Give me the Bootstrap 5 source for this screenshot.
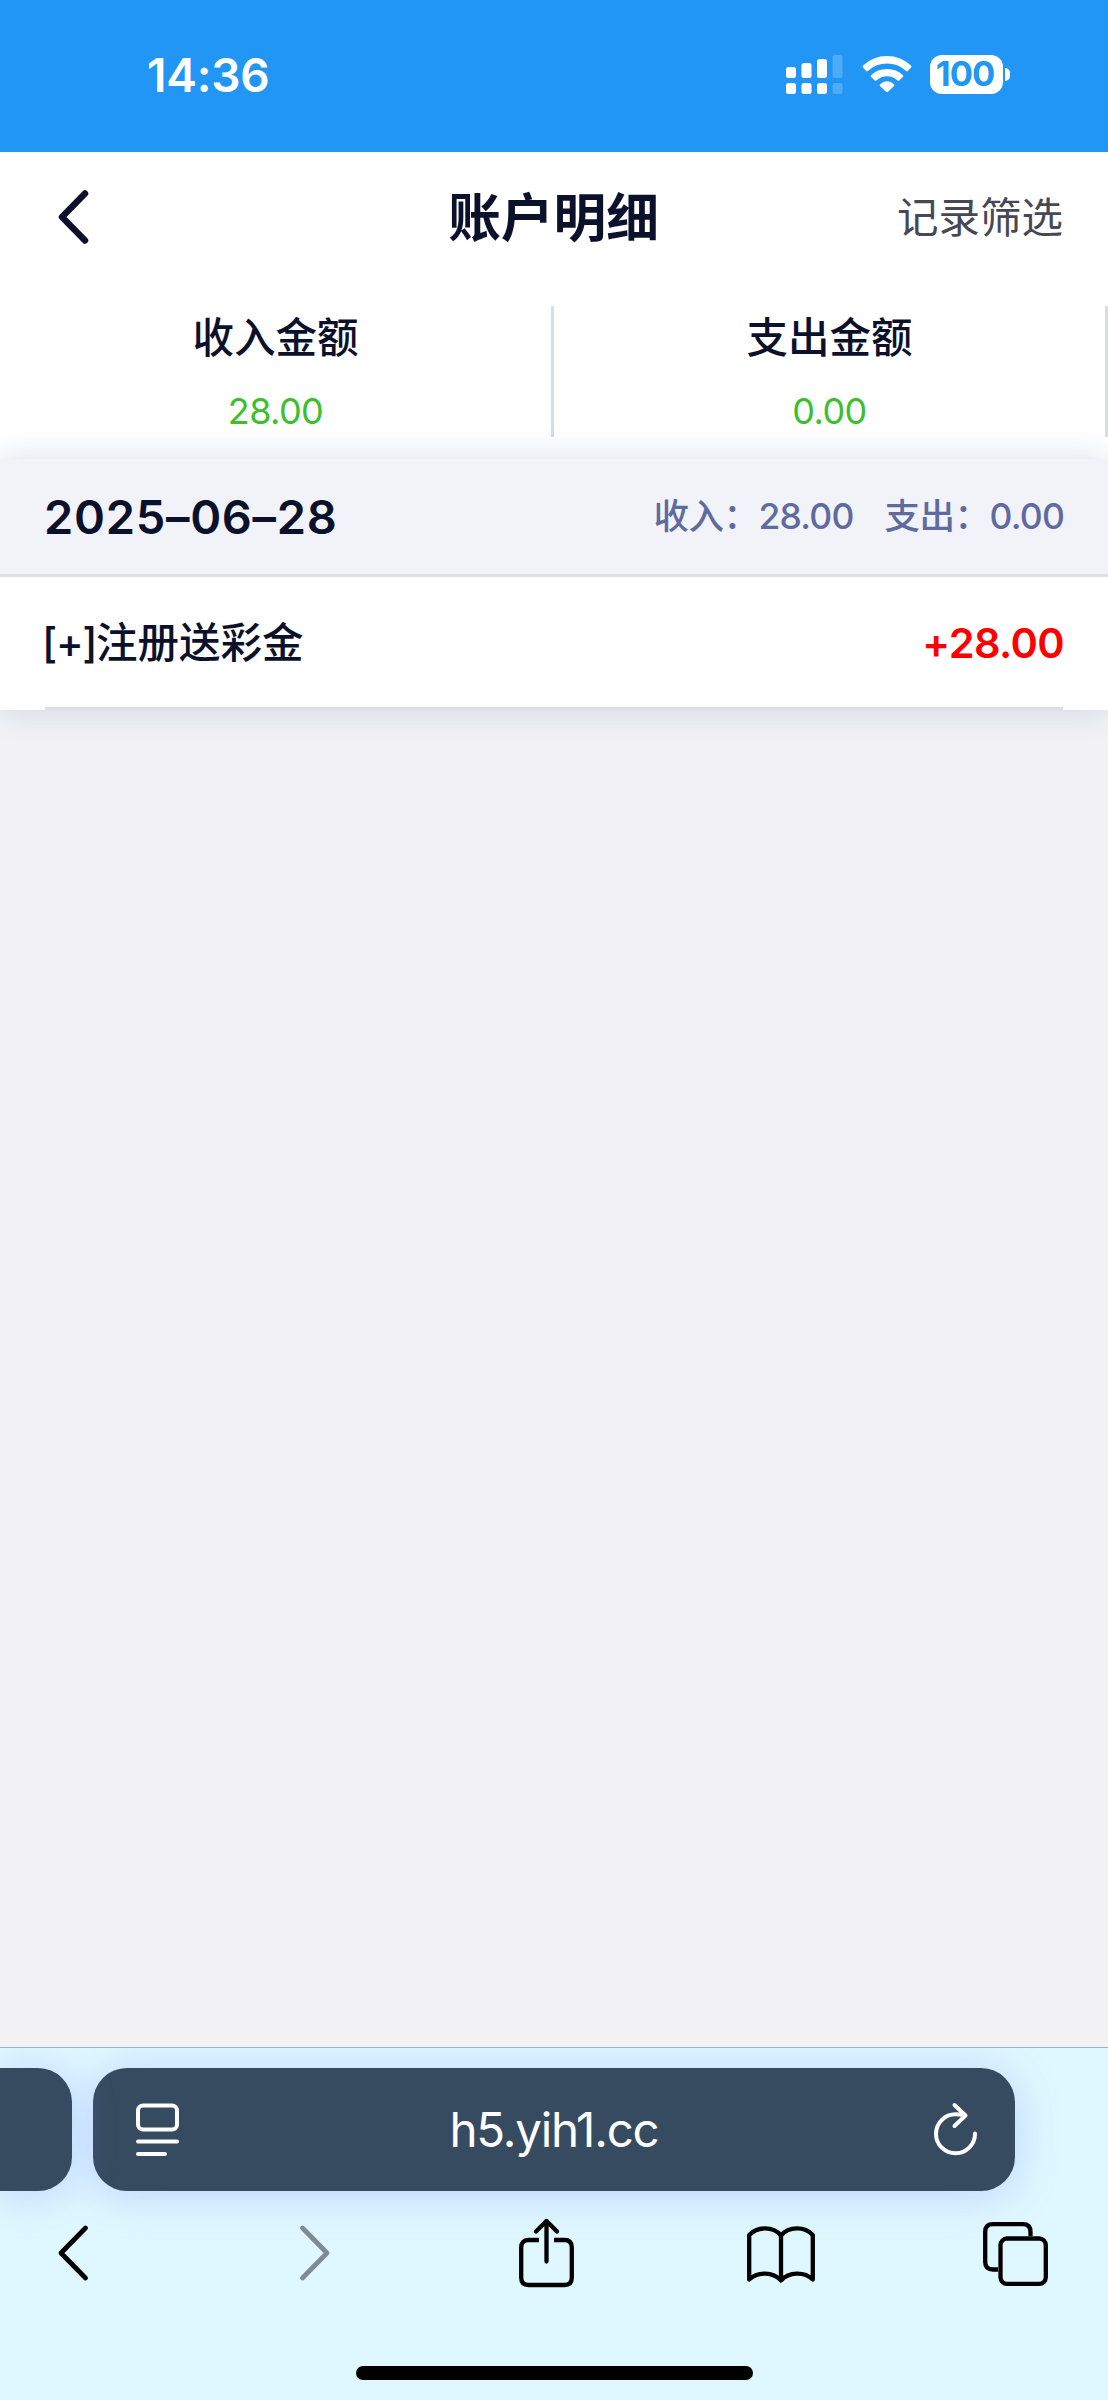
<!DOCTYPE html>
<html lang="zh-CN">
<head>
<meta charset="utf-8">
<meta name="viewport" content="width=device-width, initial-scale=1">
<title>账户明细</title>
<link href="https://cdn.jsdelivr.net/npm/bootstrap@5.3.0/dist/css/bootstrap.min.css" rel="stylesheet">
<style>
body{font-family:Inter,"Noto Sans CJK SC",sans-serif;color:#0c112b;background:#f2f2f5;line-height:1.2}
svg{display:block;flex:none;overflow:visible}
.screen{width:1108px;height:2400px}
.status-bar{height:152px;padding:0 98px 3px 147px;background:#2196f5}
.clock{font-size:46px;font-weight:600;letter-spacing:-.2px;padding-top:2px}
.cell-batt{width:80px;height:39px}
.batt-body{width:73px;height:39px;border-radius:12px;color:#2196f5;font-size:34.5px;font-weight:700;letter-spacing:-1px;padding-right:3px;line-height:38px}
.batt-tip{width:5px;height:13px;border-radius:0 6px 6px 0}
.title-bar{height:130px;padding:0 45px 0 58px}
.page-title{font-size:52.7px;font-weight:600;line-height:60px;padding-top:1px}
.filter-link{font-size:41.5px;color:#464855;text-decoration:none;line-height:60px;position:relative;top:1px}
.side-start{width:286px}
.side-end{width:300px}
.totals{height:177px;padding-top:24px}
.total-cell{height:131px;border-right:3px solid #d6dcea}
.total-label{font-size:41.5px;font-weight:500;line-height:64px}
.total-value{font-size:36px;color:#3cbf2c;line-height:44px;margin-top:19px;letter-spacing:-.6px}
.day-card{box-shadow:0 0 30px rgba(70,85,150,.2);position:relative}
.day-head{height:118px;padding:2px 44px 0 44px;background:#f2f3f9;border-bottom:3px solid #e0e0e3}
.day-date{font-size:47px;font-weight:600;letter-spacing:.7px}
.day-sum{font-size:35.5px;font-weight:500;color:#5f6b9f;gap:31px}
.sum-label{letter-spacing:-.5px}
.sum-value{letter-spacing:-.8px}
.entry{height:133px;margin:0 45px;padding-top:3px;border-bottom:3px solid #dfdfe3;font-size:41.5px;font-weight:500}
.entry-sign{letter-spacing:-1.4px;margin-left:-3px}
.entry-amount{color:#f00;font-weight:600;letter-spacing:-.6px;margin-right:-1px}
.browser{height:353px;background:#dff7fe;border-top:1px solid #9fb3c3;overflow:hidden}
.tab-strip{padding-top:20px;gap:21px}
.tab-pill{height:123px;background:#364b5f;border-radius:34px;box-shadow:0 4px 42px rgba(140,160,255,.4)}
.tab-prev{width:72px;border-radius:0 34px 34px 0;position:relative;z-index:1}
.tab-current{width:922px;padding:0 38px 0 43px}
.address{font-size:47.5px;letter-spacing:-1.2px;margin-right:5px}
.tools{height:72px;margin-top:26px;padding-left:58px}
.tool-forward{margin-left:212px}
.tool-share{margin-left:189px}
.tool-book{margin-left:173px}
.tool-tabs{margin-left:168px}
.home-line{width:397px;height:14px;border-radius:7px;margin:77px auto 0;background:#000}
</style>
</head>
<body>
<main class="screen d-flex flex-column overflow-hidden">
  <header class="status-bar d-flex justify-content-between align-items-center text-white">
    <span class="clock">14:36</span>
    <div class="d-flex align-items-center">
      <svg width="57" height="39" viewBox="0 0 57 39" fill="#fff">
        <rect x="0" y="12" width="10" height="11" rx="2.5"/><rect x="15.5" y="8" width="10" height="15" rx="2.5"/><rect x="31" y="4" width="10" height="19" rx="2.5"/><rect x="46.500" y="0" width="10" height="23" rx="2.5" opacity=".2"/>
        <rect x="0" y="28" width="10" height="11" rx="2.5"/><rect x="15.5" y="28" width="10" height="11" rx="2.5"/><rect x="31" y="28" width="10" height="11" rx="2.5"/><rect x="46.500" y="28" width="10" height="11" rx="2.5" opacity=".2"/>
      </svg>
      <svg class="ms-3 me-3" width="55" height="39" viewBox="-3 0 55 39" fill="#fff">
        <path d="M1 10.500Q11 1 25 1T49 10.500Q50 11.500 49 12.500L46 15.700Q45 16.800 43.800 15.700Q36 8.600 25 8.600T6.200 15.700Q5 16.800 4 15.700L1 12.500Q0 11.500 1 10.500Z"/>
        <path d="M9 20.200Q15.500 14 25 14T41 20.200Q41.800 21 41 21.800L37.300 25.500Q36.500 26.200 35.600 25.500Q31 21.200 25 21.200T14.400 25.500Q13.500 26.200 12.700 25.500L9 21.800Q8.200 21 9 20.200Z"/>
        <path d="M18 29.300Q21 26.300 25 26.300T32 29.300Q32.800 30 32 30.900L26 36.800Q25 37.700 24 36.800L18 30.900Q17.200 30 18 29.300Z"/>
      </svg>
      <div class="cell-batt d-flex align-items-center justify-content-between">
        <div class="batt-body bg-white text-center">100</div><div class="batt-tip bg-white"></div>
      </div>
    </div>
  </header>

  <nav class="title-bar bg-white d-flex justify-content-between align-items-center">
    <a class="side-start" href="#" aria-label="返回"><svg width="30" height="54" viewBox="0 0 30 54" fill="none" stroke="#0c112b" stroke-width="6.500" stroke-linecap="round" stroke-linejoin="round"><path d="M27 3.500L4 27L27 50.500"/></svg></a>
    <h1 class="page-title mb-0">账户明细</h1>
    <div class="side-end text-end"><a class="filter-link" href="#">记录筛选</a></div>
  </nav>

  <section class="totals bg-white d-flex text-center">
    <div class="total-cell w-50"><div class="total-label">收入金额</div><div class="total-value">28.00</div></div>
    <div class="total-cell w-50"><div class="total-label">支出金额</div><div class="total-value">0.00</div></div>
  </section>

  <section class="day-card bg-white">
    <div class="day-head d-flex justify-content-between align-items-center">
      <span class="day-date">2025–06–28</span>
      <div class="day-sum d-flex"><span><span class="sum-label">收入：</span><span class="sum-value">28.00</span></span><span><span class="sum-label">支出：</span><span class="sum-value">0.00</span></span></div>
    </div>
    <div class="entry d-flex justify-content-between align-items-center">
      <span><span class="entry-sign">[+]</span>注册送彩金</span><span class="entry-amount">+28.00</span>
    </div>
  </section>

  <footer class="browser mt-auto">
    <div class="tab-strip d-flex">
      <div class="tab-pill tab-prev"></div>
      <div class="tab-pill tab-current d-flex justify-content-between align-items-center text-white">
        <svg width="43" height="54" viewBox="0 0 43 54" fill="none" stroke="#fff" stroke-width="4" stroke-linecap="round"><rect x="2" y="2.500" width="39" height="24" rx="5"/><path d="M2 38.500H41M2 51H29"/></svg>
        <span class="address">h5.yih1.cc</span>
        <svg width="43" height="52" viewBox="0 0 43 52" fill="none" stroke="#fff" stroke-width="4" stroke-linecap="round" stroke-linejoin="round"><path d="M41 29.500A19.500 19.500 0 1 1 21.500 10.300Q26 10.300 31 11.500M20.500 1L31.500 11.500L20.500 22"/></svg>
      </div>
    </div>
    <div class="tools d-flex align-items-center">
      <svg width="30" height="56" viewBox="0 0 30 56" fill="none" stroke="#000" stroke-width="4.800" stroke-linecap="round" stroke-linejoin="round"><path d="M27.500 3L3 28L27.500 53"/></svg>
      <svg class="tool-forward" width="30" height="56" viewBox="0 0 30 56" fill="none" stroke="#7e8a96" stroke-width="4.800" stroke-linecap="round" stroke-linejoin="round"><path d="M2.500 3L27 28L2.500 53"/></svg>
      <svg class="tool-share" width="55" height="70" viewBox="0 0 55 70" fill="none" stroke="#000" stroke-width="4.300" stroke-linejoin="round"><path d="M20 22H9.500Q2.200 22 2.200 29.500V59.500Q2.200 67 9.500 67H45.500Q52.800 67 52.800 59.500V29.500Q52.800 22 45.500 22H35"/><path d="M27.500 43.500V3M17 13.500L27.500 3L38 13.500" stroke-linecap="round"/></svg>
      <svg class="tool-book" width="68" height="58" viewBox="0 0 68 58" fill="none" stroke="#000" stroke-width="4.300" stroke-linejoin="round"><path d="M34 11.500C26 2.200 10.500 2.200 2.200 11V55.500C10.500 47.500 26 47.500 34 56.500C42 47.500 57.500 47.500 65.800 55.500V11C57.500 2.200 42 2.200 34 11.500ZM34 11.500V56.500"/></svg>
      <svg class="tool-tabs" width="65" height="64" viewBox="0 0 65 64" fill="none" stroke="#000" stroke-width="4.300"><path d="M15 48.500H10Q2.200 48.500 2.200 41V11Q2.200 3.200 10 3.200H40Q47.500 3.200 47.500 11V15"/><rect x="17.500" y="17.500" width="45.300" height="45.300" rx="6.500"/></svg>
    </div>
    <div class="home-line"></div>
  </footer>
</main>
<script src="https://cdn.jsdelivr.net/npm/bootstrap@5.3.0/dist/js/bootstrap.bundle.min.js"></script>
</body>
</html>
